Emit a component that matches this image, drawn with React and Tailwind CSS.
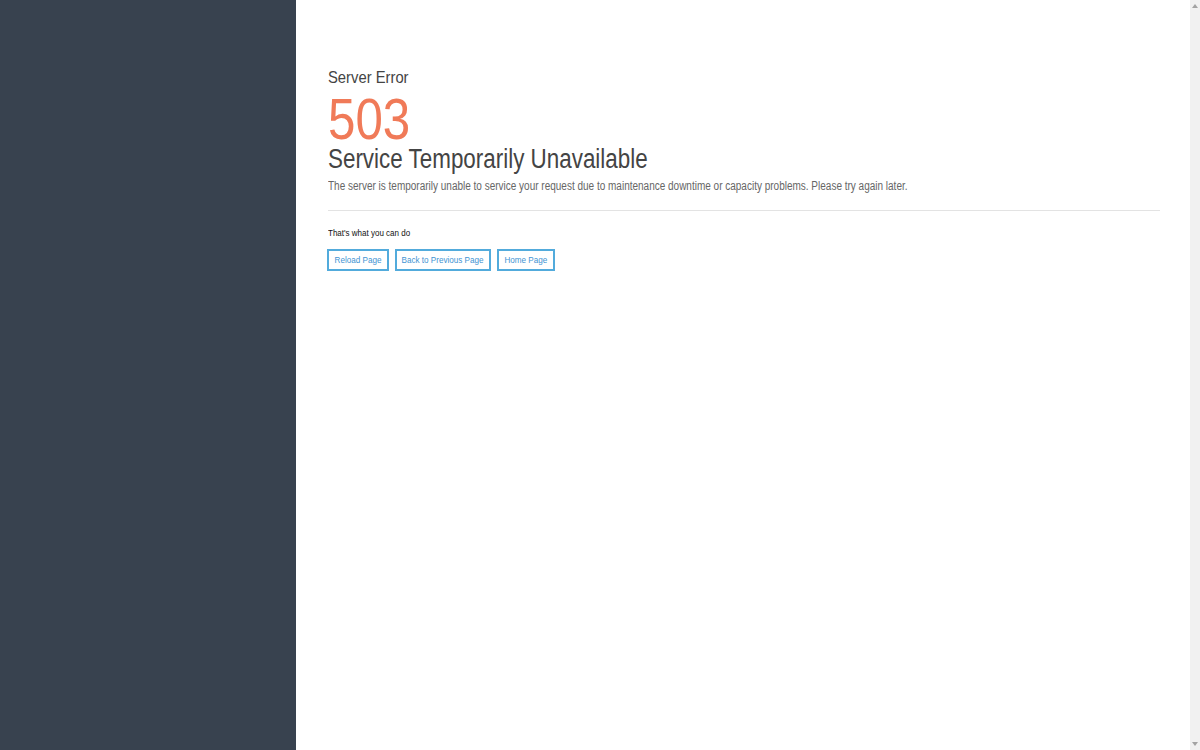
export default function App() {
  const font = { fontFamily: '"Liberation Sans", Arial, sans-serif' };
  const buttons = [
    { t: 'Reload Page', w: 'w-[62px]' },
    { t: 'Back to Previous Page', w: 'w-[96px]' },
    { t: 'Home Page', w: 'w-[58px]' },
  ];
  return (
    <div className="flex w-full h-[750px] overflow-hidden bg-white" style={font}>
      <div className="w-[296px] shrink-0 bg-[#38424f]" />
      <div className="flex-1 min-w-0 pl-[32px] pr-[30px] pt-[68px]">
        <div className="text-[17px] leading-[20px] text-[#444] whitespace-nowrap">
          <span className="inline-block origin-left scale-x-[0.87]">Server Error</span>
        </div>
        <div className="mt-[6px] text-[58px] leading-[50px] text-[#f07a58] whitespace-nowrap">
          <span className="inline-block origin-left scale-x-[0.85]">503</span>
        </div>
        <div className="text-[27px] leading-[30px] text-[#444] whitespace-nowrap">
          <span className="inline-block origin-left scale-x-[0.83]">Service Temporarily Unavailable</span>
        </div>
        <div className="mt-[3px] text-[12px] leading-[18px] text-[#666] whitespace-nowrap">
          <span className="inline-block origin-left scale-x-[0.833]">
            The server is temporarily unable to service your request due to maintenance downtime or capacity problems. Please try again later.
          </span>
        </div>
        <div className="mt-[15px] border-t border-[#e3e3e3]" />
        <div className="mt-[16px] text-[9px] leading-[12px] text-[#111] whitespace-nowrap">
          <span className="inline-block origin-left scale-x-[0.89]">That's what you can do</span>
        </div>
        <div className="mt-[10px] -ml-px flex gap-[6px]">
          {buttons.map((b) => (
            <div
              key={b.t}
              className={`h-[22px] ${b.w} flex items-center justify-center border-2 border-[#52abdc] bg-white text-[9px] leading-[12px] text-[#4294d3] whitespace-nowrap`}
            >
              <span className="inline-block scale-x-[0.9]">{b.t}</span>
            </div>
          ))}
        </div>
      </div>
      <div className="w-[10px] shrink-0 bg-[#f1f1f1] flex flex-col justify-between items-center py-[4px]">
        <svg width="6" height="4" viewBox="0 0 6 4"><path d="M3 0 L6 4 L0 4 Z" fill="#a3a3a3" /></svg>
        <svg width="6" height="4" viewBox="0 0 6 4"><path d="M0 0 L6 0 L3 4 Z" fill="#a3a3a3" /></svg>
      </div>
    </div>
  );
}
